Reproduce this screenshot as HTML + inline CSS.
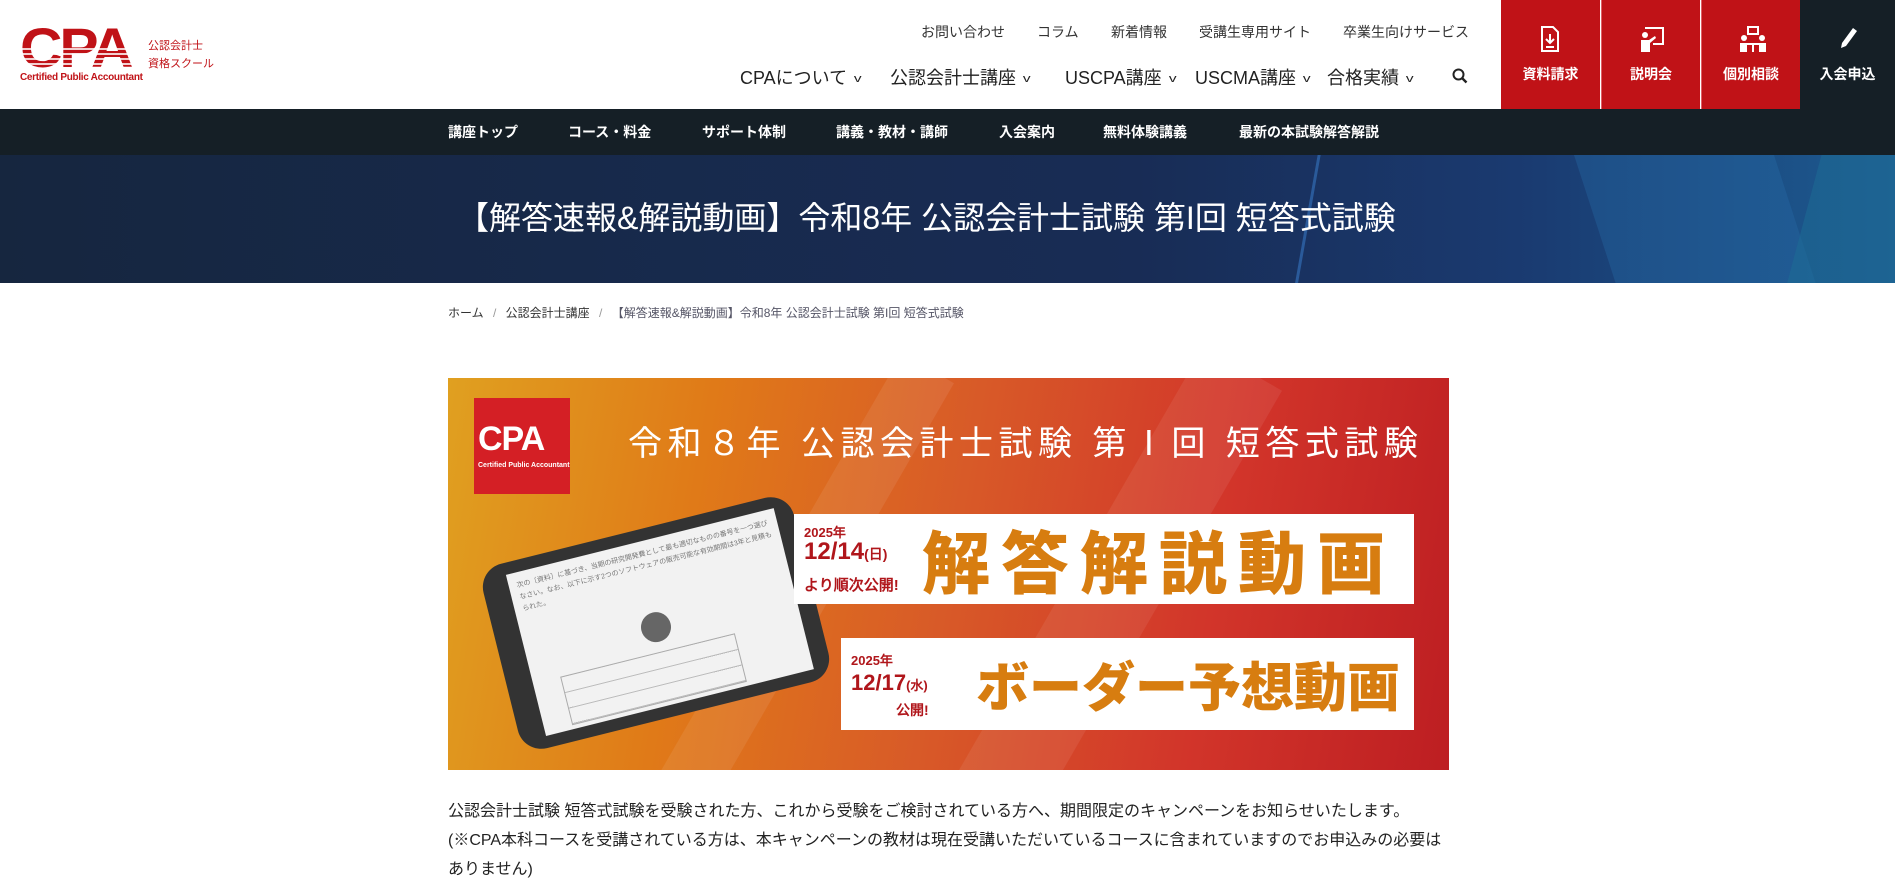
<!DOCTYPE html>
<html><head><meta charset="utf-8"><style>
*{margin:0;padding:0;box-sizing:border-box}
body{width:1895px;height:884px;overflow:hidden;background:#fff;font-family:"Liberation Sans","Noto Sans CJK JP",sans-serif;color:#222;position:relative}
.a{position:absolute;white-space:nowrap}
.tl{font-size:14px;color:#333;top:22px}
.mn{font-size:18px;color:#222;top:64px}
.mn i{font-style:normal;font-size:11px;margin-left:8px;display:inline-block;transform:scaleX(1.4) translateY(-2px)}
.sn{font-size:14px;color:#fff;font-weight:bold;top:122px}
.btn{position:absolute;top:0;height:109px;width:99px;background:#c01217;color:#fff;font-size:14px;font-weight:bold;text-align:center}
.btn span{position:absolute;left:0;right:0;top:64px}
.btn svg{position:absolute;left:37px;top:26px}
</style></head><body>
<!-- logo -->
<div class="a" style="left:20px;top:20px;font:900 56px/56px 'Liberation Sans',sans-serif;color:#c01217;letter-spacing:-3px;transform:scaleX(1.05);transform-origin:left">CPA</div>
<div class="a" style="left:20px;top:48px;width:120px;height:24px;background:repeating-linear-gradient(#fff 0 2px,transparent 2px 5px);opacity:.8"></div>
<div class="a" style="left:20px;top:72px;font:bold 10px 'Liberation Sans',sans-serif;color:#c01217;letter-spacing:-0.3px">Certified Public Accountant</div>
<div class="a" style="left:148px;top:37px;font-size:11px;color:#c01217;line-height:18px">公認会計士<br>資格スクール</div>

<div class="a tl" style="left:921px">お問い合わせ</div>
<div class="a tl" style="left:1037px">コラム</div>
<div class="a tl" style="left:1111px">新着情報</div>
<div class="a tl" style="left:1199px">受講生専用サイト</div>
<div class="a tl" style="left:1343px">卒業生向けサービス</div>

<div class="a mn" style="left:740px">CPAについて<i>v</i></div>
<div class="a mn" style="left:890px">公認会計士講座<i>v</i></div>
<div class="a mn" style="left:1065px">USCPA講座<i>v</i></div>
<div class="a mn" style="left:1195px">USCMA講座<i>v</i></div>
<div class="a mn" style="left:1327px">合格実績<i>v</i></div>
<svg class="a" style="left:1452px;top:68px" width="16" height="16" viewBox="0 0 16 16"><circle cx="6.5" cy="6.5" r="5" fill="none" stroke="#222" stroke-width="2"/><path d="M10 10l4.5 4.5" stroke="#222" stroke-width="2.4"/></svg>

<div class="btn" style="left:1501px"><svg width="24" height="26" viewBox="0 0 24 26"><path d="M4 1h11l5 5v19H4z" fill="none" stroke="#fff" stroke-width="2"/><path d="M12 8v8M8 13l4 4 4-4M8 21h8" stroke="#fff" stroke-width="2" fill="none"/></svg><span>資料請求</span></div>
<div class="btn" style="left:1601px;border-left:1px solid #e06066"><svg width="26" height="26" viewBox="0 0 26 26"><path d="M6 2h18v16H14" fill="none" stroke="#fff" stroke-width="2"/><circle cx="6" cy="9" r="3" fill="#fff"/><path d="M2 26V14h8l6-4 1 2-6 5v9z" fill="#fff"/></svg><span>説明会</span></div>
<div class="btn" style="left:1701px;border-left:1px solid #e06066"><svg width="28" height="26" viewBox="0 0 28 26"><rect x="9" y="1" width="10" height="7" fill="none" stroke="#fff" stroke-width="2"/><circle cx="5" cy="12" r="3" fill="#fff"/><circle cx="23" cy="12" r="3" fill="#fff"/><path d="M1 26v-9h7v9zM20 26v-9h7v9zM8 17h12v2h-5v7h-2v-7H8z" fill="#fff"/></svg><span>個別相談</span></div>
<div class="btn" style="left:1800px;width:95px;background:#151f26"><svg width="22" height="24" viewBox="0 0 22 24"><path d="M16 2l4 3-11 15-5 2 1-5z" fill="#fff"/></svg><span>入会申込</span></div>

<div class="a" style="left:0;top:109px;width:1895px;height:46px;background:#151f26"></div>
<div class="a sn" style="left:448px">講座トップ</div>
<div class="a sn" style="left:568px">コース・料金</div>
<div class="a sn" style="left:702px">サポート体制</div>
<div class="a sn" style="left:836px">講義・教材・講師</div>
<div class="a sn" style="left:999px">入会案内</div>
<div class="a sn" style="left:1103px">無料体験講義</div>
<div class="a sn" style="left:1239px">最新の本試験解答解説</div>

<div class="a" style="left:0;top:155px;width:1895px;height:128px;background:linear-gradient(90deg,#16263f 0%,#182c55 60%,#1a3a70 80%,#1c5a90 100%);overflow:hidden">
<div style="position:absolute;left:1300px;top:0;width:3px;height:200px;background:#2a5a9a;transform:skewX(-10deg)"></div>
<div style="position:absolute;left:1600px;top:-20px;width:200px;height:200px;background:rgba(40,110,170,.35);transform:skewX(18deg)"></div>
<div style="position:absolute;left:1800px;top:0;width:120px;height:160px;background:rgba(30,110,150,.5);transform:skewX(-15deg)"></div>
</div>
<div class="a" style="left:457px;top:193px;font-size:32px;color:#fff">【解答速報&amp;解説動画】令和8年 公認会計士試験 第I回 短答式試験</div>

<div class="a" style="left:448px;top:304px;font-size:12px;color:#333">ホーム <span style="color:#999;margin:0 6px">/</span> 公認会計士講座 <span style="color:#999;margin:0 6px">/</span> <span style="color:#556">【解答速報&amp;解説動画】令和8年 公認会計士試験 第I回 短答式試験</span></div>

<!-- banner -->
<div class="a" style="left:448px;top:378px;width:1001px;height:392px;background:linear-gradient(100deg,#e0a020 0%,#e07a18 25%,#d85a28 50%,#d2352a 75%,#bd1e22 100%);overflow:hidden">
<div style="position:absolute;left:300px;top:-50px;width:60px;height:600px;background:rgba(255,255,255,.08);transform:rotate(30deg)"></div>
<div style="position:absolute;left:600px;top:-50px;width:90px;height:600px;background:rgba(255,255,255,.07);transform:rotate(30deg)"></div>
<div style="position:absolute;left:26px;top:20px;width:96px;height:96px;background:#d41f25"></div>
<div style="position:absolute;left:30px;top:42px;font:900 34px 'Liberation Sans',sans-serif;color:#fff;letter-spacing:-1px">CPA</div>
<div style="position:absolute;left:30px;top:84px;font:bold 7px 'Liberation Sans',sans-serif;color:#fff">Certified Public Accountant</div>
<div style="position:absolute;left:180px;top:38px;font-size:34px;color:#fff;letter-spacing:5.5px">令和８年 公認会計士試験 第Ⅰ回 短答式試験</div>
<!-- phone -->
<div style="position:absolute;left:48px;top:150px;width:320px;height:190px;background:#333;border-radius:24px;transform:rotate(-14deg);transform-origin:center">
<div style="position:absolute;left:26px;top:12px;width:276px;height:166px;background:#f2f2f2;font-size:7px;color:#777;padding:8px;line-height:12px;white-space:normal;overflow:hidden">次の〔資料〕に基づき、当期の研究開発費として最も適切なものの番号を一つ選びなさい。なお、以下に示す2つのソフトウェアの販売可能な有効期間は3年と見積もられた。<div style="margin:28px 0 0 110px;width:30px;height:30px;border-radius:50%;background:#666"></div>
<div style="margin:10px 0 0 20px;width:180px;height:50px;border:1px solid #aaa;background:repeating-linear-gradient(#f2f2f2 0 15px,#bbb 15px 16px)"></div></div></div>
<div style="position:absolute;left:346px;top:136px;width:620px;height:90px;background:#fff"></div>
<div style="position:absolute;left:356px;top:144px;font:bold 13px sans-serif;color:#b0161b">2025年</div>
<div style="position:absolute;left:356px;top:160px;font:bold 24px 'Liberation Sans',sans-serif;color:#b0161b">12/14<small style="font-size:14px">(日)</small></div>
<div style="position:absolute;left:356px;top:196px;font:bold 15px sans-serif;color:#b0161b">より順次公開!</div>
<div style="position:absolute;left:474px;top:138px;font:900 68px/86px 'Noto Sans CJK JP',sans-serif;color:#d77d10;letter-spacing:11px">解答解説動画</div>
<div style="position:absolute;left:393px;top:260px;width:573px;height:92px;background:#fff"></div>
<div style="position:absolute;left:403px;top:272px;font:bold 13px sans-serif;color:#b0161b">2025年</div>
<div style="position:absolute;left:403px;top:292px;font:bold 22px 'Liberation Sans',sans-serif;color:#b0161b">12/17<small style="font-size:13px">(水)</small></div>
<div style="position:absolute;left:448px;top:322px;font:bold 14px sans-serif;color:#b0161b">公開!</div>
<div style="position:absolute;left:528px;top:266px;font:900 53px/80px 'Noto Sans CJK JP',sans-serif;color:#d77d10">ボーダー予想動画</div>
</div>

<div class="a" style="left:448px;top:797px;font-size:16px;line-height:29px;color:#222">公認会計士試験 短答式試験を受験された方、これから受験をご検討されている方へ、期間限定のキャンペーンをお知らせいたします。<br>(※CPA本科コースを受講されている方は、本キャンペーンの教材は現在受講いただいているコースに含まれていますのでお申込みの必要は<br>ありません)</div>
</body></html>
